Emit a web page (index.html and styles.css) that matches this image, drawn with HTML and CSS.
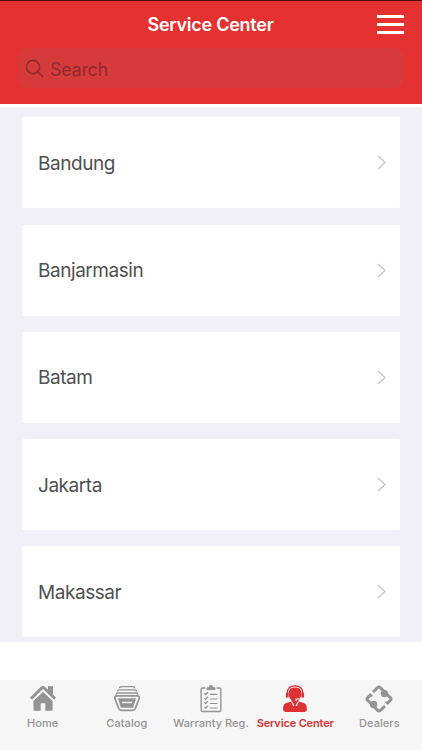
FILE: index.html
```html
<!DOCTYPE html>
<html lang="en">
<head>
<meta charset="utf-8">
<title>Service Center</title>
<link rel="stylesheet" href="styles.css">
</head>
<body>
<div class="app">
  <header class="header">
    <div class="titlebar">
      <h1 class="title">Service Center</h1>
      <div class="menu"><i></i><i></i><i></i></div>
    </div>
    <div class="search">
      <svg class="search-icon" viewBox="0 0 20 20"><circle cx="8" cy="8" r="6.6"/><path d="M12.7 12.7l5.4 5.4"/></svg>
      <span>Search</span>
    </div>
  </header>
  <main class="list">
    <div class="card"><span class="city">Bandung</span><svg class="chevron" viewBox="0 0 9 15"><path d="M1 1l7 6.5-7 6.5"/></svg></div>
    <div class="card"><span class="city">Banjarmasin</span><svg class="chevron" viewBox="0 0 9 15"><path d="M1 1l7 6.5-7 6.5"/></svg></div>
    <div class="card"><span class="city">Batam</span><svg class="chevron" viewBox="0 0 9 15"><path d="M1 1l7 6.5-7 6.5"/></svg></div>
    <div class="card"><span class="city">Jakarta</span><svg class="chevron" viewBox="0 0 9 15"><path d="M1 1l7 6.5-7 6.5"/></svg></div>
    <div class="card"><span class="city">Makassar</span><svg class="chevron" viewBox="0 0 9 15"><path d="M1 1l7 6.5-7 6.5"/></svg></div>
  </main>
  <nav class="tabs">
    <div class="tab">
      <svg class="icon" viewBox="0 0 28 28"><path class="fill" d="M14 6.8L23.6 15.6V25.8H16.3V18.2H11.7V25.8H4.5V15.6ZM19 1.3H24V12L19 7.5Z"/><path class="cut" d="M2 15.3L14 4.4L26 15.3" stroke-width="3.6"/><path d="M2 13.6L12.8 3Q14 1.8 15.2 3L26 13.6" stroke-width="2.9"/></svg>
      <span>Home</span>
    </div>
    <div class="tab">
      <svg class="icon" viewBox="0 0 28 28"><path d="M6.5 3.2Q6.5 1.7 8.2 1.7H20Q21.7 1.7 21.7 3.2M4.6 6.4Q4.6 4.8 6.5 4.8H21.6Q23.5 4.8 23.5 6.4M3.1 9.7Q3.1 8 5 8H23Q24.9 8 24.9 9.7" stroke-width="1.3"/><path d="M4 10.9H24Q27.2 10.9 26 14L22.3 23.5Q21.5 25.3 19.5 25.3H8.6Q6.6 25.3 5.8 23.5L2 14Q.9 10.9 4 10.9Z" stroke-width="1.8"/><path class="fill" d="M5 13.2H23L20.2 22.8H7.8Z"/><path class="cut" d="M9 17.5H19" stroke-width="1.4"/></svg>
      <span>Catalog</span>
    </div>
    <div class="tab">
      <svg class="icon" viewBox="0 0 28 28"><path d="M8.4 3H5.5Q4.2 3 4.2 4.3V25.3Q4.2 26.5 5.5 26.5H22.5Q23.8 26.5 23.8 25.3V4.3Q23.8 3 22.5 3H19.6" stroke-width="1.4"/><path class="fill" d="M9.6 4.9V2.9Q9.6 2.3 10.5 2.3H11.5Q12 0 14 0T16.5 2.3H17.5Q18.4 2.3 18.4 2.9V4.9Z"/><path d="M12.8 9.4H20.5M12.8 14H20.5M12.8 18.5H20.5M12.8 23H20.5" stroke-width="1.2"/><path d="M7.4 8.3L8.7 9.5 11 7M7.4 12.9L8.7 14.1 11 11.6M7.4 17.4L8.7 18.6 11 16.1M7.4 21.9L8.7 23.1 11 20.6" stroke-width="1.4"/></svg>
      <span>Warranty Reg.</span>
    </div>
    <div class="tab active">
      <svg class="icon" viewBox="0 0 28 28"><path class="fill" d="M7.6 8Q8 2.6 14 2.6T20.4 8Q20.2 13 17.4 15.4V16.6L22.8 18Q25.5 18.9 25.9 22.8Q26.3 26.9 23.4 26.9H4.6Q1.7 26.9 2.1 22.8Q2.5 18.9 5.2 18L10.6 16.6V15.4Q7.8 13 7.6 8Z"/><path d="M6.2 8.2Q6.3 .8 14 .8T21.8 8.2" stroke-width="1.2"/><path d="M6.3 7.8V12.5M21.7 7.8V12.5" stroke-width="2.7"/><path class="cut" d="M20.6 12.8Q19 14.2 15 14.1V16.1" stroke-width="1.1"/><path class="cut" d="M10.8 16.8L12.8 21M17.2 16.8L15.2 21" stroke-width="1.2"/></svg>
      <span>Service Center</span>
    </div>
    <div class="tab">
      <svg class="icon" viewBox="0 0 28 28"><path d="M8 7L12.7 2.6Q14 1.5 15.3 2.6L25.4 12.7Q26.5 14 25.4 15.3L21.7 18.9M20 21L15.3 25.4Q14 26.5 12.7 25.4L2.6 15.3Q1.5 14 2.6 12.7L6.2 9.1" stroke-width="3"/><circle class="fill" cx="19.4" cy="8.6" r="3.7"/><circle class="fill" cx="8.6" cy="19.4" r="3.7"/><path d="M4.7 10.6H7.6M20.4 17.4H23.3" stroke-width="1.8"/></svg>
      <span>Dealers</span>
    </div>
  </nav>
</div>
</body>
</html>
```
FILE: styles.css
```css
* { box-sizing: border-box; }
body { margin: 0; background: #fff; font-family: Inter, "Liberation Sans", sans-serif; }
.app { height: 750px; display: flex; flex-direction: column; overflow: hidden; }
.header { flex: none; height: 104px; background: #e53131; border-top: 1px solid #500b0d; }
.titlebar { height: 47px; padding: 0 18px 0 17px; display: grid; grid-template-columns: 1fr auto 1fr; align-items: center; }
.title { grid-column: 2; margin: 0; color: #fff; font-size: 18px; line-height: 24px; font-weight: 600; letter-spacing: -.25px; }
.menu { justify-self: end; width: 27px; display: grid; gap: 5.2px; }
.menu i { height: 2.8px; background: #fff; }
.search { height: 40px; margin: 0 18px; padding: 2px 7px 0; display: flex; align-items: center; gap: 5px; border-radius: 9px; background: #d73a3b; color: #8d2c30; font-size: 18px; letter-spacing: -.3px; }
.search-icon { width: 20px; height: 20px; fill: none; stroke: currentColor; stroke-width: 1.6; }
.list { flex: none; height: 535px; margin-top: 3px; padding: 10.3px 22px 0; background: #f1f0f7; display: flex; flex-direction: column; gap: 16.3px; }
.card { flex: none; height: 91px; padding: 0 14px 0 16px; display: flex; align-items: center; justify-content: space-between; border-radius: 2px; background: #fff; }
.city { padding-top: 2px; color: #505050; font-size: 19px; line-height: 24px; letter-spacing: -.45px; }
.chevron { width: 9px; height: 15px; fill: none; stroke: #c8c8cb; stroke-width: 1.4; }
.tabs { flex: none; height: 70px; margin-top: 38px; background: #f6f6f6; display: grid; grid-template-columns: repeat(5, 84.2px); justify-content: center; }
.tab { display: flex; flex-direction: column; align-items: center; padding-top: 5px; color: #949494; font-size: 11px; line-height: 14px; font-weight: 500; letter-spacing: .05px; white-space: nowrap; }
.tab.active { color: #df3034; font-weight: 600; letter-spacing: -.15px; }
.icon { width: 28px; height: 28px; margin-bottom: 3px; flex: none; fill: none; stroke: currentColor; }
.fill { fill: currentColor; stroke: none; }
.cut { stroke: #f6f6f6; }
```
